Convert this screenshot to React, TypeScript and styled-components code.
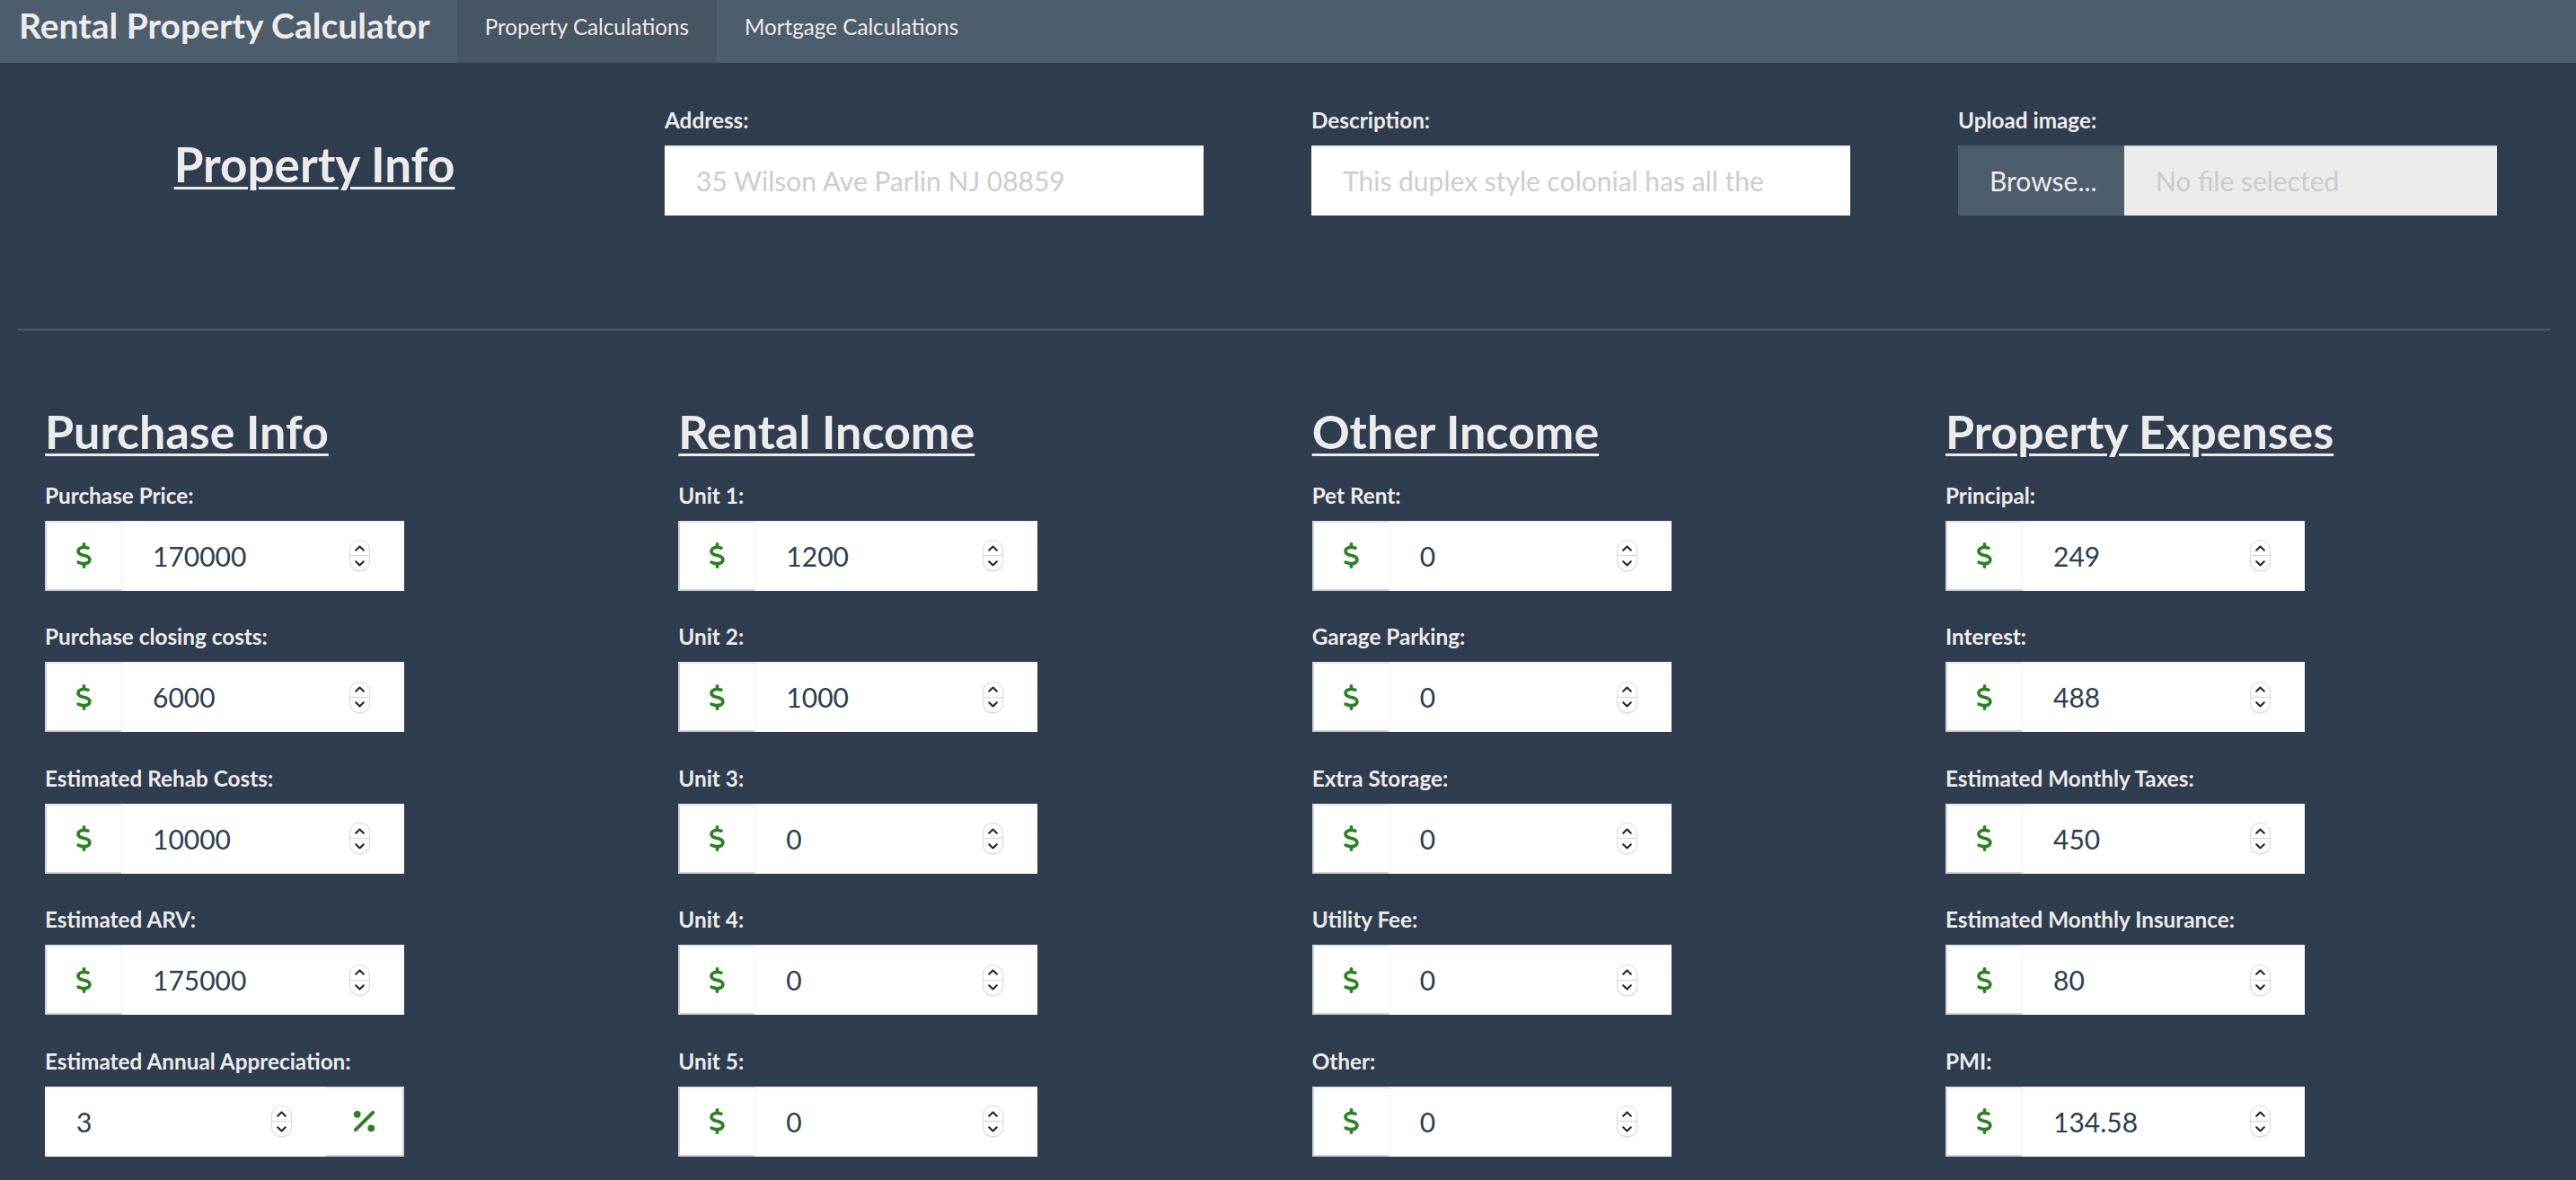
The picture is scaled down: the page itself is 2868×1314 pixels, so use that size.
import React from "react";
import styled, { createGlobalStyle } from "styled-components";
import { FaDollarSign, FaPercent } from "react-icons/fa6";

const GlobalStyle = createGlobalStyle`
  html, body { margin: 0; padding: 0; }
  body {
    background: #2f3d4f;
    font-family: Lato, "Open Sans", sans-serif;
    color: #ebebeb;
  }
  * { box-sizing: border-box; }
`;

const Page = styled.div`
  min-height: 1314px;
  background: #2f3d4f;
`;

const NavBar = styled.nav`
  height: 70px;
  background: #4e5d6c;
  display: flex;
  align-items: stretch;
`;

const Brand = styled.div`
  display: flex;
  align-items: center;
  padding: 0 30px 14px 21px;
  font-size: 39px;
  font-weight: 700;
  line-height: 47px;
  color: #ebebeb;
`;

const NavLink = styled.a<{ $active?: boolean }>`
  display: flex;
  align-items: center;
  padding: 0 31px 11px;
  font-size: 24.2px;
  line-height: 30px;
  color: #ebebeb;
  text-decoration: none;
  background: ${(p) => (p.$active ? "#485563" : "transparent")};
`;

const InfoRow = styled.section`
  display: grid;
  grid-template-columns: repeat(4, 720px);
  padding: 49px 0 126px 20px;
`;

const HeadingCell = styled.div`
  display: flex;
  align-items: center;
  justify-content: center;
  padding: 7px 60px 0 0;
`;

const SectionTitle = styled.h2<{ $size?: number }>`
  margin: 0;
  font-size: ${(p) => p.$size ?? 52}px;
  line-height: 62px;
  font-weight: 700;
  color: #ebebeb;
  text-decoration: underline;
  text-decoration-thickness: 3px;
  text-underline-offset: 5px;
`;

const Field = styled.div`
  display: flex;
  flex-direction: column;
  align-items: flex-start;
`;

const Label = styled.label`
  display: block;
  font-size: 24.3px;
  line-height: 29px;
  font-weight: 700;
  color: #ebebeb;
  margin-bottom: 14px;
`;

const TextInput = styled.input`
  width: 600px;
  height: 78px;
  border: none;
  outline: none;
  padding: 0 35px;
  font-family: Lato, sans-serif;
  font-size: 30px;
  color: #2b3e50;
  background: #fff;
  box-shadow: inset 0 2px 1px rgba(0, 0, 0, 0.07);
  &::placeholder { color: #cdcdcd; }
`;

const Upload = styled.label`
  display: flex;
  width: 600px;
  height: 78px;
  font-size: 30px;
  cursor: pointer;
  input { display: none; }
`;

const BrowseButton = styled.span`
  display: flex;
  align-items: center;
  width: 185px;
  padding-left: 35px;
  background: #4e5d6c;
  color: #ebebeb;
`;

const FileName = styled.span`
  flex: 1;
  display: flex;
  align-items: center;
  padding-left: 35px;
  background: #ebebeb;
  color: #cbcbcb;
  box-shadow: inset 0 2px 1px rgba(0, 0, 0, 0.07);
`;

const Divider = styled.hr`
  margin: 0 0 0 20px;
  width: 2819px;
  height: 2px;
  border: none;
  background: #4e5d6c;
`;

const CalcGrid = styled.section`
  display: grid;
  grid-template-columns: repeat(4, 705.33px);
  padding: 81px 0 30px 50px;
`;

const Column = styled.div`
  display: flex;
  flex-direction: column;
  align-items: flex-start;
  gap: 36.5px;
  h2 { margin-bottom: -11px; }
`;

const InputGroup = styled.div`
  display: flex;
  width: 400px;
  height: 78px;
`;

const Addon = styled.span<{ $side: "left" | "right" }>`
  flex: none;
  width: ${(p) => (p.$side === "left" ? "85px" : "87px")};
  display: flex;
  align-items: center;
  justify-content: center;
  background: #fff;
  color: #2b8022;
  border-top: 2px solid #e2e5ea;
  border-bottom: 2px solid #cdd2db;
  ${(p) => (p.$side === "left" ? "border-left: 2px solid #cdd2db;" : "border-right: 2px solid #cdd2db;")}
`;

const NumberBox = styled.div`
  flex: 1 1 0;
  min-width: 0;
  display: flex;
  align-items: center;
  padding-right: 38px;
  background: #fff;
  box-shadow: inset 0 2px 1px rgba(0, 0, 0, 0.05), inset 1px 0 0 #f3f3f3;
`;

const NumberInput = styled.input`
  flex: 1 1 0;
  width: 0;
  min-width: 0;
  height: 100%;
  border: none;
  outline: none;
  background: transparent;
  padding: 0 0 0 35px;
  font-family: Lato, sans-serif;
  font-size: 30px;
  color: #2b3e50;
`;

const Spinner = styled.span`
  flex: none;
  display: flex;
  flex-direction: column;
  width: 23px;
  height: 35px;
  border: 1px solid #dadada;
  border-radius: 11px;
  background: #fff;
  box-shadow: 0 1px 1px rgba(0, 0, 0, 0.08);
  overflow: hidden;
`;

const SpinHalf = styled.span`
  flex: 1;
  display: flex;
  align-items: center;
  justify-content: center;
  & + & { border-top: 1px solid #d4d4d4; }
`;

const Chevron = ({ up }: { up?: boolean }) => (
  <svg width="11" height="7" viewBox="0 0 11 7">
    <polyline
      points={up ? "1.2,5.8 5.5,1.5 9.8,5.8" : "1.2,1.2 5.5,5.5 9.8,1.2"}
      fill="none"
      stroke="#222"
      strokeWidth="2"
      strokeLinecap="round"
      strokeLinejoin="round"
    />
  </svg>
);

type Item = { label: string; value: string; unit?: "$" | "%" };

const NumberField = ({ label, value, unit = "$" }: Item) => (
  <Field>
    <Label>{label}</Label>
    <InputGroup>
      {unit === "$" && (
        <Addon $side="left">
          <FaDollarSign size={29} />
        </Addon>
      )}
      <NumberBox>
        <NumberInput type="text" defaultValue={value} />
        <Spinner>
          <SpinHalf><Chevron up /></SpinHalf>
          <SpinHalf><Chevron /></SpinHalf>
        </Spinner>
      </NumberBox>
      {unit === "%" && (
        <Addon $side="right">
          <FaPercent size={31} />
        </Addon>
      )}
    </InputGroup>
  </Field>
);

const sections: { title: string; items: Item[] }[] = [
  {
    title: "Purchase Info",
    items: [
      { label: "Purchase Price:", value: "170000" },
      { label: "Purchase closing costs:", value: "6000" },
      { label: "Estimated Rehab Costs:", value: "10000" },
      { label: "Estimated ARV:", value: "175000" },
      { label: "Estimated Annual Appreciation:", value: "3", unit: "%" },
    ],
  },
  {
    title: "Rental Income",
    items: [
      { label: "Unit 1:", value: "1200" },
      { label: "Unit 2:", value: "1000" },
      { label: "Unit 3:", value: "0" },
      { label: "Unit 4:", value: "0" },
      { label: "Unit 5:", value: "0" },
    ],
  },
  {
    title: "Other Income",
    items: [
      { label: "Pet Rent:", value: "0" },
      { label: "Garage Parking:", value: "0" },
      { label: "Extra Storage:", value: "0" },
      { label: "Utility Fee:", value: "0" },
      { label: "Other:", value: "0" },
    ],
  },
  {
    title: "Property Expenses",
    items: [
      { label: "Principal:", value: "249" },
      { label: "Interest:", value: "488" },
      { label: "Estimated Monthly Taxes:", value: "450" },
      { label: "Estimated Monthly Insurance:", value: "80" },
      { label: "PMI:", value: "134.58" },
    ],
  },
];

export default function App() {
  return (
    <Page>
      <GlobalStyle />
      <NavBar>
        <Brand>Rental Property Calculator</Brand>
        <NavLink $active href="#">Property Calculations</NavLink>
        <NavLink href="#">Mortgage Calculations</NavLink>
      </NavBar>

      <InfoRow>
        <HeadingCell>
          <SectionTitle $size={53}>Property Info</SectionTitle>
        </HeadingCell>
        <Field>
          <Label>Address:</Label>
          <TextInput placeholder="35 Wilson Ave Parlin NJ 08859" />
        </Field>
        <Field>
          <Label>Description:</Label>
          <TextInput placeholder="This duplex style colonial has all the" />
        </Field>
        <Field>
          <Label>Upload image:</Label>
          <Upload>
            <input type="file" />
            <BrowseButton>Browse...</BrowseButton>
            <FileName>No file selected</FileName>
          </Upload>
        </Field>
      </InfoRow>

      <Divider />

      <CalcGrid>
        {sections.map((s) => (
          <Column key={s.title}>
            <SectionTitle>{s.title}</SectionTitle>
            {s.items.map((it) => (
              <NumberField key={it.label} {...it} />
            ))}
          </Column>
        ))}
      </CalcGrid>
    </Page>
  );
}
